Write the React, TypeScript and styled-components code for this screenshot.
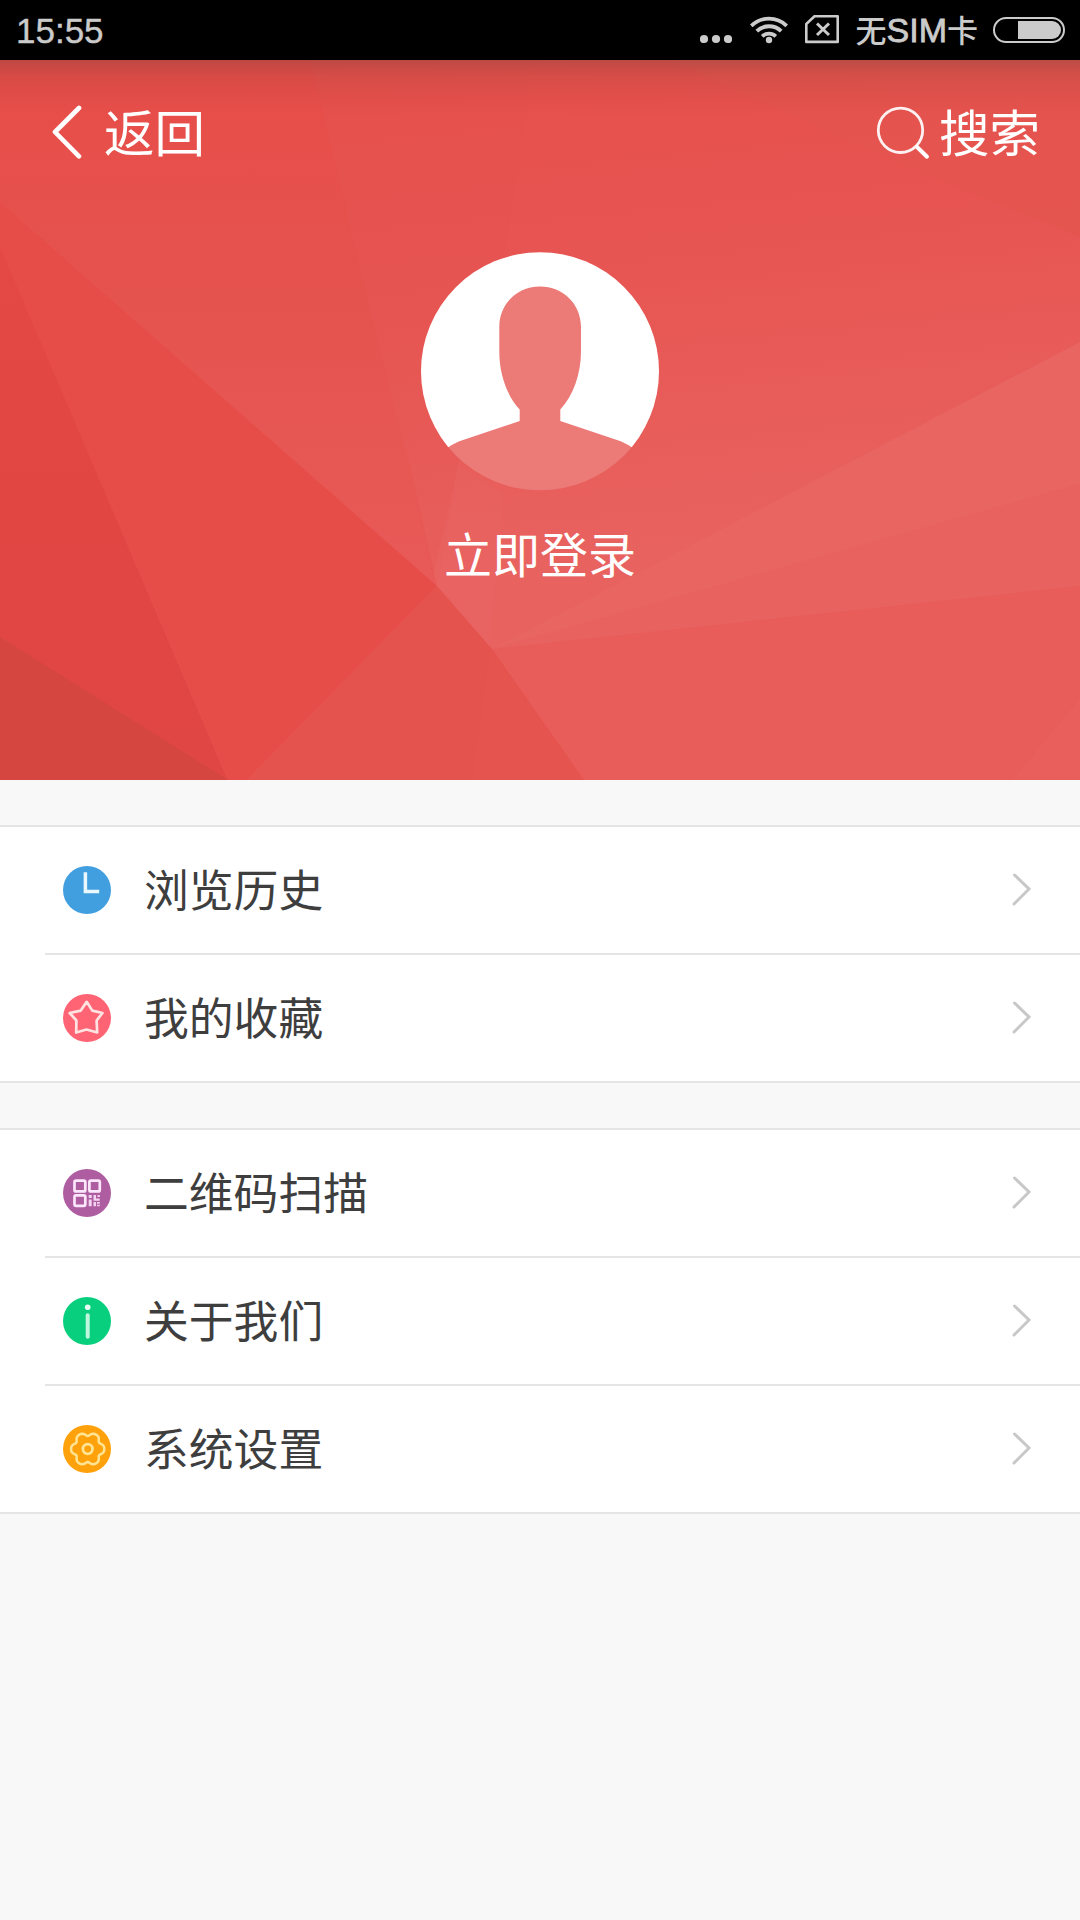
import React from 'react';
import styled, { createGlobalStyle } from 'styled-components';

const GlobalStyle = createGlobalStyle`
  * { box-sizing: border-box; }
  body {
    margin: 0;
    background: #f8f8f8;
    font-family: 'Noto Sans CJK SC', 'Noto Sans', sans-serif;
  }
  svg { display: block; flex: none; }
`;

const Screen = styled.div`
  display: flex;
  flex-direction: column;
  width: 1080px;
  min-height: 1920px;
  background: #f8f8f8;
`;

const StatusBar = styled.header`
  display: flex;
  align-items: center;
  justify-content: space-between;
  height: 60px;
  padding: 0 15px 0 16px;
  background: #000;
  color: #cbcbcb;
  font-family: 'Liberation Sans', 'Noto Sans CJK SC', sans-serif;
  font-size: 35px;
  line-height: 60px;
`;

const StatusText = styled.span`
  padding-top: 1px;
  -webkit-text-stroke: 0.4px currentColor;
  white-space: nowrap;
`;

const StatusIcons = styled.div`
  display: flex;
  align-items: center;
`;

const IconSlot = styled.span<{ $before: number }>`
  margin-left: ${(p) => p.$before}px;
`;

const Carrier = styled.span`
  height: 60px;
  margin: 0 15px 0 17px;
  padding-top: 1px;
  font-size: 31px;
  font-weight: 500;
  line-height: 58px;
  white-space: nowrap;
`;

const Latin = styled.span`
  font-size: 34px;
  -webkit-text-stroke: 0.8px currentColor;
`;

const Hero = styled.section`
  display: grid;
  height: 720px;
  overflow: hidden;
  background: #e8524e;
  color: #fff;
`;

const HeroArt = styled.svg`
  grid-area: 1 / 1;
`;

const HeroContent = styled.div`
  grid-area: 1 / 1;
  z-index: 1;
  display: flex;
  flex-direction: column;
  align-items: center;
`;

const NavBar = styled.nav`
  display: flex;
  align-items: center;
  justify-content: space-between;
  width: 100%;
  height: 144px;
  padding: 0 40px 0 50px;
`;

const NavButton = styled.button<{ $gap: number }>`
  display: flex;
  align-items: center;
  gap: ${(p) => p.$gap}px;
  padding: 0;
  border: 0;
  background: none;
  color: inherit;
  font: 400 50.5px/72px 'Noto Sans CJK SC', sans-serif;
`;

const NavText = styled.span`
  padding-bottom: 5px;
`;

const Login = styled.button`
  display: flex;
  flex-direction: column;
  align-items: center;
  gap: 26px;
  margin-top: 48px;
  padding: 0;
  border: 0;
  background: none;
  color: inherit;
  font: 400 48px/70px 'Noto Sans CJK SC', sans-serif;
`;

const Group = styled.section`
  margin-top: 45px;
  border-top: 2px solid #e5e5e5;
  border-bottom: 2px solid #e5e5e5;
  background: #fff;
`;

const Row = styled.div`
  display: flex;
  align-items: center;
  height: 126px;
  padding: 0 49px 0 63px;
  color: #3e3e3e;
`;

const Divider = styled.div`
  height: 2px;
  margin-left: 45px;
  background: #e5e5e5;
`;

const Label = styled.span`
  flex: 1;
  margin-left: 33px;
  padding-bottom: 5px;
  font-size: 44.8px;
  line-height: 64px;
`;

const Dots = () => (
  <svg width="32" height="60" viewBox="0 0 32 60" fill="#cbcbcb">
    <circle cx="4" cy="39" r="4.1" />
    <circle cx="16" cy="39" r="4.1" />
    <circle cx="28" cy="39" r="4.1" />
  </svg>
);

const Wifi = () => (
  <svg width="38" height="60" viewBox="0 0 38 60" fill="none" stroke="#cbcbcb" strokeWidth="3.8">
    <circle cx="19" cy="40" r="3.2" fill="#cbcbcb" stroke="none" />
    <path d="M1.3 25.8a25.5 25.5 0 0 1 35.4 0M6.8 31.2a17.5 17.5 0 0 1 24.4 0M12.2 36.300a10 10 0 0 1 13.600 0" />
  </svg>
);

const SimMissing = () => (
  <svg width="34" height="60" viewBox="0 0 34 60" fill="none" stroke="#cbcbcb">
    <path d="M9.5 16.3h23.2v25.6H1.3V24z" strokeWidth="2.6" strokeLinejoin="round" />
    <path d="M12 23.500l12 11.500M24 23.500L12 35" strokeWidth="3" />
  </svg>
);

const Battery = () => (
  <svg width="72" height="60" viewBox="0 0 72 60">
    <rect x="1" y="18" width="70" height="24" rx="12" fill="none" stroke="#cbcbcb" strokeWidth="2" />
    <path d="M25 21h34a9 9 0 0 1 0 18H25z" fill="#cbcbcb" />
  </svg>
);

const BackIcon = () => (
  <svg width="32" height="56" viewBox="0 0 32 56" fill="none" stroke="#fff" strokeWidth="4.6" strokeLinecap="round" strokeLinejoin="round">
    <path d="M29 4L5 28L29 52.300" />
  </svg>
);

const SearchIcon = () => (
  <svg width="54" height="56" viewBox="0 0 54 56" fill="none" stroke="#fff" strokeLinecap="round">
    <circle cx="24.5" cy="26.3" r="22.2" strokeWidth="2.8" strokeOpacity="0.92" />
    <path d="M41 43L51 52.7" strokeWidth="4" />
  </svg>
);

const Avatar = () => (
  <svg width="238" height="239" viewBox="0 0 238 239">
    <defs>
      <clipPath id="avatarClip">
        <circle cx="119" cy="119.3" r="119" />
      </clipPath>
    </defs>
    <g clipPath="url(#avatarClip)">
      <rect width="238" height="195" fill="#fff" />
      <path
        d="M119 34.500C96 34.500 78.300 52 78.300 75V100C78.300 122 86 144 98.700 157.500V169L42 188Q33 191 27 195.500L0 239H238L211 195.500Q205 191 196 188L139.300 169V157.500C152 144 160 122 160 100V75C160 52 142 34.500 119 34.500Z"
        fill="#ec7b78"
      />
    </g>
  </svg>
);

const Facets = () => (
  <HeroArt width="1080" height="720" viewBox="0 0 1080 720">
    <defs>
      <linearGradient id="base" x1="0" y1="0" x2="0.15" y2="1">
        <stop offset="0" stopColor="#e74e4a" />
        <stop offset="0.35" stopColor="#e75552" />
        <stop offset="0.75" stopColor="#e8625f" />
        <stop offset="1" stopColor="#e86462" />
      </linearGradient>
      <linearGradient id="leftMid" x1="0" y1="0" x2="0" y2="1">
        <stop offset="0" stopColor="#e84d49" />
        <stop offset="0.45" stopColor="#e5534e" />
        <stop offset="1" stopColor="#e85a58" />
      </linearGradient>
      <linearGradient id="leftDark" x1="0" y1="0" x2="0" y2="1">
        <stop offset="0" stopColor="#e44945" />
        <stop offset="0.5" stopColor="#e14643" />
        <stop offset="1" stopColor="#e04644" />
      </linearGradient>
      <linearGradient id="shade" x1="0" y1="0" x2="0" y2="1">
        <stop offset="0" stopColor="#7d403a" stopOpacity="0.4" />
        <stop offset="0.3" stopColor="#a04038" stopOpacity="0.22" />
        <stop offset="1" stopColor="#c04038" stopOpacity="0" />
      </linearGradient>
    </defs>
    <rect width="1080" height="720" fill="url(#base)" />
    <path d="M0 0H310L331 84L358 200L413 419L437 526L0 142Z" fill="url(#leftMid)" />
    <path d="M310 0H530L510 163L458 405L433 516L413 419L358 200L331 84Z" fill="#e4524e" fillOpacity="0.22" />
    <path d="M668 0L895 102L1080 177V0Z" fill="#e4554f" fillOpacity="0.6" />
    <path d="M503 433L490 587L437 526L458 405Z" fill="#e96866" fillOpacity="0.25" />
    <path d="M492 589L1080 282V424Z" fill="#e86562" />
    <path d="M492 589L1080 424V526Z" fill="#e86260" />
    <path d="M492 589L1080 526V720H584Z" fill="#e85c59" />
    <path d="M1080 638V720H1012Z" fill="#e85f5b" />
    <path d="M437 526L492 589L584 720H247Z" fill="#e5534e" />
    <path d="M490 589L584 720H472Z" fill="#e6544f" />
    <path d="M0 142L437 526L247 720H228L0 186Z" fill="#e74d48" />
    <path d="M0 186L228 720H217L0 577Z" fill="url(#leftDark)" />
    <path d="M0 577L228 720H0Z" fill="#d54641" />
    <rect width="1080" height="56" fill="url(#shade)" />
  </HeroArt>
);

const ClockGlyph = () => <path d="M22.400 6.300V25.600H36.200" fill="none" stroke="#e9f8ff" strokeWidth="3.500" />;

const StarGlyph = () => (
  <path
    d="M23.700 7.800L29.300 16.600L39.500 19L33.600 26.500L34.200 38.500L23.500 35.500L13.200 38.500L13.400 26.500L6.700 19L17.800 16.600Z"
    fill="none"
    stroke="#ffe3e3"
    strokeWidth="2.700"
    strokeLinejoin="round"
  />
);

const QrGlyph = () => (
  <g>
    <g fill="none" stroke="#fbe6fb" strokeWidth="2.700">
      <rect x="11.500" y="11.600" width="10.800" height="10.800" rx="1.500" />
      <rect x="26.400" y="11.600" width="10.400" height="10.800" rx="1.500" />
      <rect x="11.500" y="26.400" width="10.800" height="10.400" rx="1.500" />
    </g>
    <path
      d="M25.700 26h3v3h-3zM25.700 30.600h3v6.600h-3zM30.500 26h2.500v3.500h3.700v2.300h-6.200zM34.500 26h2.300v2h-2.300zM30.500 33h2.500v4.200h-2.500zM34 33h2.800v1.800H34zM34 35.800h2.800v1.500H34z"
      fill="#f3d3f1"
    />
  </g>
);

const InfoGlyph = () => (
  <g>
    <circle cx="24.700" cy="10.200" r="2.800" fill="#eafff4" />
    <path d="M24.700 18.300V39.800" stroke="#bff7de" strokeWidth="4" strokeLinecap="round" />
  </g>
);

const gearPath =
  Array.from({ length: 72 }, (_, i) => {
    const a = (i * 5 * Math.PI) / 180;
    const r = 15.2 + 1.8 * Math.cos(6 * a) - 0.4 * Math.cos(12 * a);
    return `${i ? 'L' : 'M'}${(24.7 + r * Math.cos(a)).toFixed(2)} ${(24 + r * Math.sin(a)).toFixed(2)}`;
  }).join('') + 'Z';

const GearGlyph = () => (
  <g fill="none" stroke="#ffe593" strokeWidth="2.500" strokeLinejoin="round">
    <path d={gearPath} />
    <circle cx="24.700" cy="24" r="4.800" strokeWidth="2.800" />
  </g>
);

const Chevron = () => (
  <svg width="20" height="34" viewBox="0 0 20 34" fill="none" stroke="#c8c8c8" strokeWidth="3" strokeLinecap="round">
    <path d="M3.500 2L18 16L3 31" />
  </svg>
);

type Item = { label: string; color: string; Glyph: React.FC };

const groups: Item[][] = [
  [
    { label: '浏览历史', color: '#419fdf', Glyph: ClockGlyph },
    { label: '我的收藏', color: '#ff6474', Glyph: StarGlyph },
  ],
  [
    { label: '二维码扫描', color: '#ae5da1', Glyph: QrGlyph },
    { label: '关于我们', color: '#08cf7d', Glyph: InfoGlyph },
    { label: '系统设置', color: '#ffa10a', Glyph: GearGlyph },
  ],
];

export default function App() {
  return (
    <Screen>
      <GlobalStyle />
      <StatusBar>
        <StatusText>15:55</StatusText>
        <StatusIcons>
          <Dots />
          <IconSlot $before={18}>
            <Wifi />
          </IconSlot>
          <IconSlot $before={17}>
            <SimMissing />
          </IconSlot>
          <Carrier>
            无<Latin>SIM</Latin>卡
          </Carrier>
          <Battery />
        </StatusIcons>
      </StatusBar>
      <Hero>
        <Facets />
        <HeroContent>
          <NavBar>
            <NavButton $gap={22}>
              <BackIcon />
              <NavText>返回</NavText>
            </NavButton>
            <NavButton $gap={9}>
              <SearchIcon />
              <NavText>搜索</NavText>
            </NavButton>
          </NavBar>
          <Login>
            <Avatar />
            立即登录
          </Login>
        </HeroContent>
      </Hero>
      {groups.map((items) => (
        <Group key={items[0].label}>
          {items.map(({ label, color, Glyph }, i) => (
            <React.Fragment key={label}>
              {i > 0 && <Divider />}
              <Row>
                <svg width="48" height="48" viewBox="0 0 48 48">
                  <circle cx="24" cy="24" r="24" fill={color} />
                  <Glyph />
                </svg>
                <Label>{label}</Label>
                <Chevron />
              </Row>
            </React.Fragment>
          ))}
        </Group>
      ))}
    </Screen>
  );
}
